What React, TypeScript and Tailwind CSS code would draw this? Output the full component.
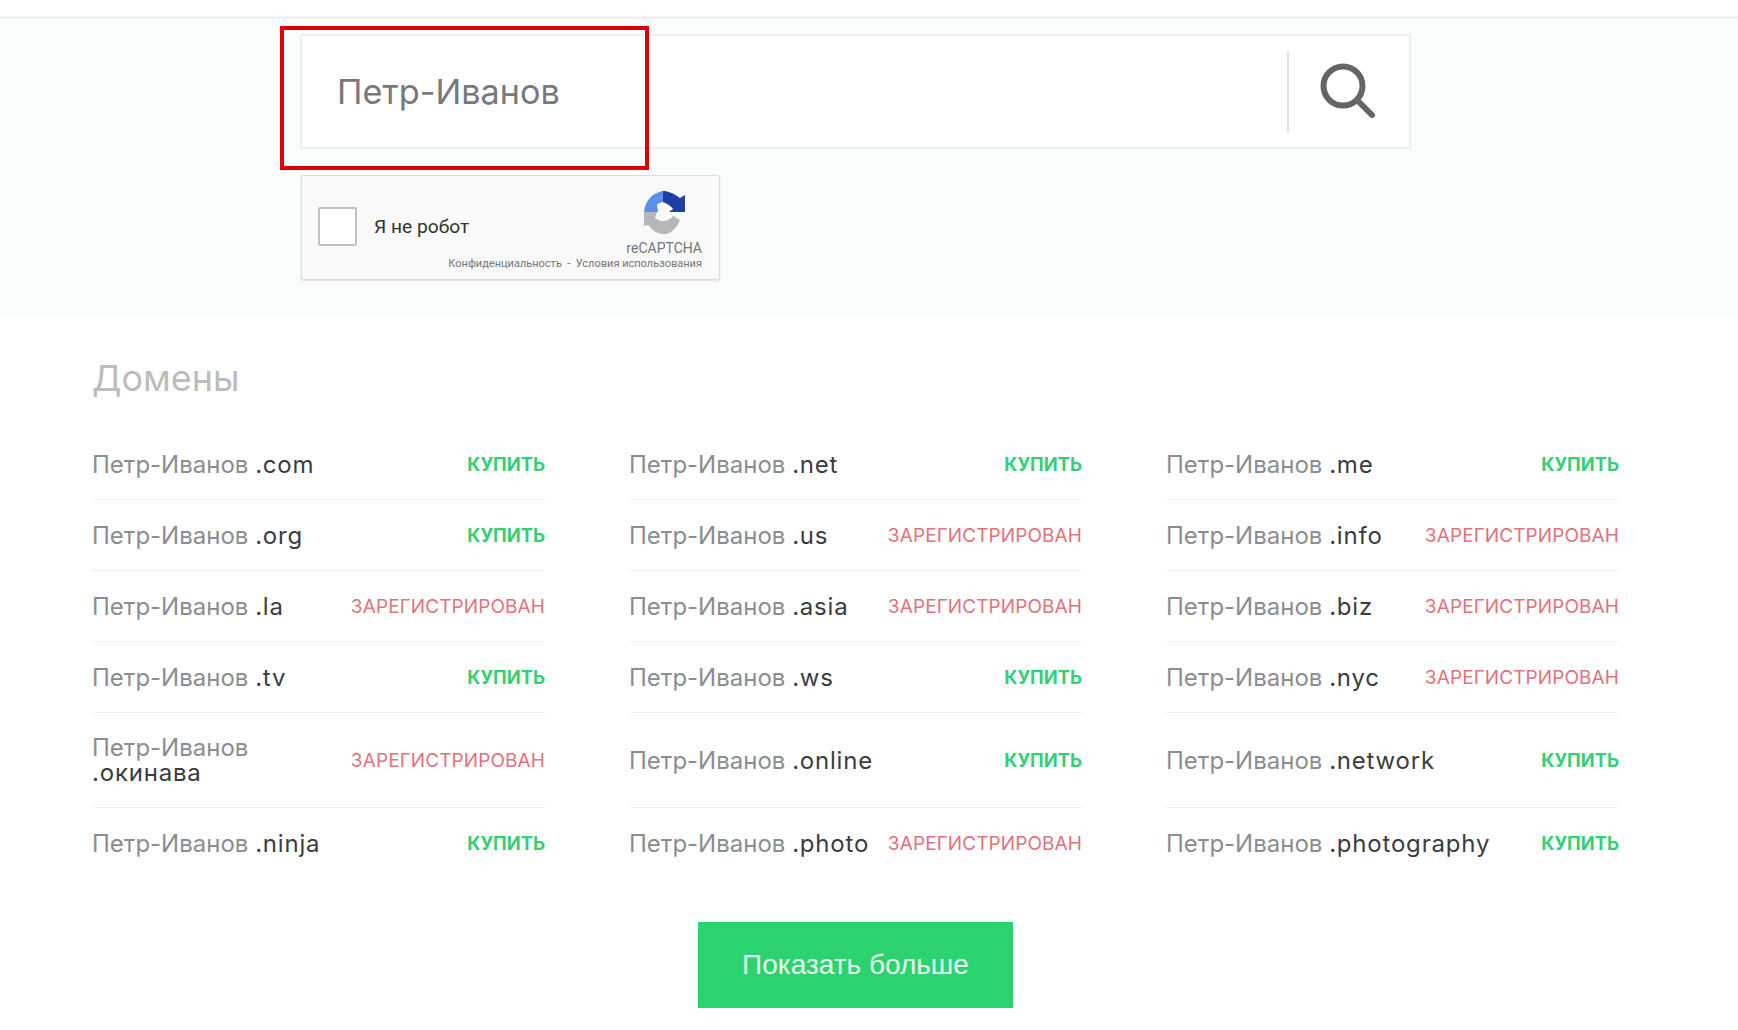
type Domain = { tld: string; free: boolean };

const domains: Domain[] = [
  { tld: '.com', free: true },
  { tld: '.net', free: true },
  { tld: '.me', free: true },
  { tld: '.org', free: true },
  { tld: '.us', free: false },
  { tld: '.info', free: false },
  { tld: '.la', free: false },
  { tld: '.asia', free: false },
  { tld: '.biz', free: false },
  { tld: '.tv', free: true },
  { tld: '.ws', free: true },
  { tld: '.nyc', free: false },
  { tld: '.окинава', free: false },
  { tld: '.online', free: true },
  { tld: '.network', free: true },
  { tld: '.ninja', free: true },
  { tld: '.photo', free: false },
  { tld: '.photography', free: true },
];

const RecaptchaLogo = () => (
  <svg width="42" height="44" viewBox="0 0 42 44" className="block">
    <path d="M0 21 C1 14 3 10 6 7 C9 3 14 1 19 0 L19 11 C16 12 14 12 13 14 L14 21 Z" fill="#5a8fe8" />
    <path d="M19 0 C24 0 29 2 36 7 L41 4 L41 21 L25 21 L29 18 C27 15 24 13 19 11 Z" fill="#1f3fa5" />
    <path d="M0 21 L13 21 L11 27 C13 29 16 30 19 30 C23 30 27 28 29 25 L36 29 C34 34 30 39 27 41 C24 43 21 43 19 43 C15 43 11 41 9 39 L4 34 L0 35 Z" fill="#b5b7b9" />
  </svg>
);

export default function App() {
  return (
    <div className="min-h-[1030px] bg-white font-['Inter','Noto_Sans',sans-serif]">
      <div className="h-[18px] border-b border-[#e6e8e8]" />

      <section className="h-[300px] bg-[#f8fcfd] pl-[300px] pt-[16px]">
        <div className="relative w-[1111px]">
          <div className="flex h-[115px] items-center border-2 border-[#efefef] bg-white">
            <div className="flex-1 pt-[2px] pl-[35px] text-[34.2px] leading-none text-[#77797b]">Петр-Иванов</div>
            <div className="flex h-[80px] w-[122px] items-center justify-center border-l-2 border-[#e3e3e3]">
              <svg className="mr-[2px]" width="60" height="60" viewBox="0 0 60 60" fill="none" stroke="#636569" strokeWidth="6" strokeLinecap="round">
                <circle cx="25" cy="24" r="19.5" />
                <path d="M39 38 L54 53" />
              </svg>
            </div>
          </div>
          <div className="absolute -left-[20px] -top-[8px] h-[144px] w-[369px] border-[4px] border-[#e00007]" />
        </div>

        <div className="mt-[26px] ml-[1px] flex h-[105px] w-[419px] rounded-[3px] border border-[#dcdcdc] bg-[#f9f9f9] pr-[17px] pl-[16px] shadow-[0_1px_2px_rgba(0,0,0,0.12)]">
          <div className="mt-[31px] h-[39px] w-[39px] shrink-0 rounded-[2px] border-2 border-[#c2c2c2] bg-white" />
          <div className="mt-[40px] ml-[17px] w-[60px] font-['Roboto',sans-serif] text-[19.2px] leading-[22px] whitespace-nowrap text-[#333]">Я не робот</div>
          <div className="ml-auto flex flex-col items-end pt-[15px]">
            <div className="mr-[16px]">
              <RecaptchaLogo />
            </div>
            <div className="mt-[5px] font-['Roboto',sans-serif] text-[14px] leading-[16px] text-[#777]">reCAPTCHA</div>
            <div className="mt-[1px] font-['Roboto',sans-serif] text-[11px] leading-[14px] whitespace-nowrap text-[#777]">
              Конфиденциальность&nbsp; -&nbsp; Условия использования
            </div>
          </div>
        </div>
      </section>

      <section className="px-[92px] pt-[37px]">
        <h2 className="text-[36px] leading-[46px] text-[#bcbcbc]">Домены</h2>

        <div className="mt-[28px] grid w-[1527px] grid-cols-3 gap-x-[84px]">
          {domains.map((d, i) => {
            const lastRow = i >= 15;
            const tall = i >= 12 && i < 15;
            return (
              <div
                key={d.tld}
                className={`flex items-center justify-between gap-3 ${tall ? 'h-[95px]' : lastRow ? 'h-[70px]' : 'h-[71px]'} ${lastRow ? '' : 'border-b border-[#f1f2f2]'}`}
              >
                <div className="text-[24px] leading-[25px] text-[#8b8d8f]">
                  Петр-Иванов <span className="tracking-[0.8px] text-[#3a3c3f]">{d.tld}</span>
                </div>
                <div
                  className={`shrink-0 leading-none ${d.free ? 'text-[18.3px] font-bold text-[#35cf75]' : 'text-[19px] tracking-[0.1px] text-[#e2727c]'}`}
                >
                  {d.free ? 'КУПИТЬ' : 'ЗАРЕГИСТРИРОВАН'}
                </div>
              </div>
            );
          })}
        </div>

        <div className="mt-[44px] ml-[606px] flex h-[86px] w-[315px] items-center justify-center bg-[#2bd36f] font-['Liberation_Sans',sans-serif] text-[28px] text-[#e9fbf0]">
          Показать больше
        </div>
      </section>
    </div>
  );
}
